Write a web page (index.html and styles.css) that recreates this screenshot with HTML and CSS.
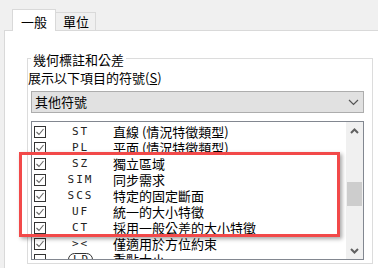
FILE: index.html
```html
<!DOCTYPE html>
<html lang="zh-Hant">
<head>
<meta charset="utf-8">
<link rel="stylesheet" href="styles.css">
</head>
<body>
<div class="tabs">
  <div class="tab active">一般</div>
  <div class="tab">單位</div>
</div>
<div class="panel">
  <div class="group">
    <div class="group-title">幾何標註和公差</div>
    <div class="label">展示以下項目的符號(<u>S</u>)</div>
    <div class="select">
      <span>其他符號</span>
      <svg class="chev" width="11" height="7" viewBox="0 0 11 7"><polyline points="1,1 5.5,5.5 10,1" fill="none" stroke="#555" stroke-width="1.2"/></svg>
    </div>
    <div class="list">
      <div class="rows">
        <div class="row"><span class="cb on"></span><span class="code">ST</span><span class="desc">直線 (情況特徵類型)</span></div>
        <div class="row"><span class="cb on"></span><span class="code">PL</span><span class="desc">平面 (情況特徵類型)</span></div>
        <div class="row"><span class="cb on"></span><span class="code">SZ</span><span class="desc">獨立區域</span></div>
        <div class="row"><span class="cb on"></span><span class="code">SIM</span><span class="desc">同步需求</span></div>
        <div class="row"><span class="cb on"></span><span class="code">SCS</span><span class="desc">特定的固定斷面</span></div>
        <div class="row"><span class="cb on"></span><span class="code">UF</span><span class="desc">統一的大小特徵</span></div>
        <div class="row"><span class="cb on"></span><span class="code">CT</span><span class="desc">採用一般公差的大小特徵</span></div>
        <div class="row"><span class="cb on"></span><span class="code">&gt;&lt;</span><span class="desc">僅適用於方位約束</span></div>
        <div class="row"><span class="cb"></span><span class="code"><span class="ld">LD</span></span><span class="desc">重點大小</span></div>
      </div>
      <div class="scroll">
        <div class="sbtn"><svg width="9" height="6" viewBox="0 0 9 6"><polyline points="1,5 4.5,1.5 8,5" fill="none" stroke="#606060" stroke-width="2"/></svg></div>
        <div class="track"><div class="thumb"></div></div>
        <div class="sbtn"><svg width="9" height="6" viewBox="0 0 9 6"><polyline points="1,1 4.5,4.5 8,1" fill="none" stroke="#606060" stroke-width="2"/></svg></div>
      </div>
    </div>
  </div>
</div>
<div class="highlight"></div>
</body>
</html>
```
FILE: styles.css
```css
html, body {
  margin: 0;
  padding: 0;
}
body {
  width: 378px;
  height: 268px;
  overflow: hidden;
  background: #f0f0f0;
  font-family: "Noto Sans CJK TC", "Noto Sans", sans-serif;
  font-size: 13px;
  line-height: 16px;
  color: #000;
  position: relative;
}
.tabs {
  display: flex;
  align-items: flex-end;
  height: 30px;
  padding-left: 12px;
}
.tab {
  box-sizing: border-box;
  width: 40px;
  height: 18px;
  border: 1px solid #d9d9d9;
  border-bottom: none;
  border-left: none;
  background: #f0f0f0;
  display: flex;
  align-items: center;
  justify-content: center;
  padding-left: 1px;
}
.tab.active {
  width: 44px;
  height: 22px;
  border-left: 1px solid #d9d9d9;
  background: #fff;
  margin-bottom: -1px;
  position: relative;
  z-index: 1;
  padding-left: 0;
  align-items: flex-start;
  padding-top: 4px;
}
.panel {
  margin-left: 4px;
  height: 238px;
  border-top: 1px solid #d9d9d9;
  border-left: 1px solid #d9d9d9;
  background: #fff;
  padding-top: 27px;
  padding-left: 22px;
  box-sizing: border-box;
}
.group {
  box-sizing: border-box;
  width: 346px;
  border: 1px solid #dcdcdc;
  padding-bottom: 3px;
}
.group-title {
  display: block;
  width: max-content;
  background: #fff;
  margin-top: -7px;
  margin-left: 3px;
  padding: 0 2px;
}
.label {
  margin-top: 2px;
}
.label u {
  text-underline-offset: 1px;
}
.select {
  box-sizing: border-box;
  margin: 5px 0 0 3px;
  width: 333px;
  height: 22px;
  background: #e1e1e1;
  border: 1px solid #adadad;
  display: flex;
  align-items: center;
  justify-content: space-between;
  padding: 0 4px 0 3px;
}
.chev {
  display: block;
}
.list {
  box-sizing: border-box;
  margin: 8px 0 0 3px;
  width: 333px;
  height: 139px;
  border: 1px solid #828790;
  display: flex;
  overflow: hidden;
}
.rows {
  flex: 1;
  padding-top: 2px;
  overflow: hidden;
}
.row {
  height: 16px;
  display: flex;
  align-items: center;
  padding-left: 2px;
  white-space: nowrap;
}
.cb {
  box-sizing: border-box;
  width: 12px;
  height: 12px;
  border: 1px solid #333;
  flex: none;
  background: #fff;
}
.cb.on {
  background: #fff url("data:image/svg+xml;utf8,<svg xmlns='http://www.w3.org/2000/svg' width='10' height='10' viewBox='0 0 10 10'><polyline points='1.5,5 4,7.5 8.5,2' fill='none' stroke='%23666' stroke-width='1.1'/></svg>") center/10px 10px no-repeat;
}
.code {
  width: 67px;
  flex: none;
  text-align: center;
  font-family: "DejaVu Sans Mono", monospace;
  font-size: 11px;
  letter-spacing: 2px;
  padding-left: 2px;
  box-sizing: border-box;
  color: #222;
}
.ld {
  display: inline-block;
  border: 1px solid #333;
  border-radius: 7px;
  padding: 0 2px 0 4px;
  line-height: 11px;
}
.scroll {
  width: 17px;
  flex: none;
  background: #f0f0f0;
  display: flex;
  flex-direction: column;
}
.sbtn {
  height: 17px;
  display: flex;
  align-items: center;
  justify-content: center;
  flex: none;
}
.track {
  flex: 1;
  padding-top: 43px;
}
.thumb {
  margin: 0 1px;
  height: 24px;
  background: #cdcdcd;
}
.highlight {
  position: absolute;
  left: 19px;
  top: 152px;
  width: 321px;
  height: 85px;
  box-sizing: border-box;
  border: 3px solid #f24949;
  box-shadow: 2px 2px 4px rgba(0, 0, 0, 0.35);
  pointer-events: none;
}
```
